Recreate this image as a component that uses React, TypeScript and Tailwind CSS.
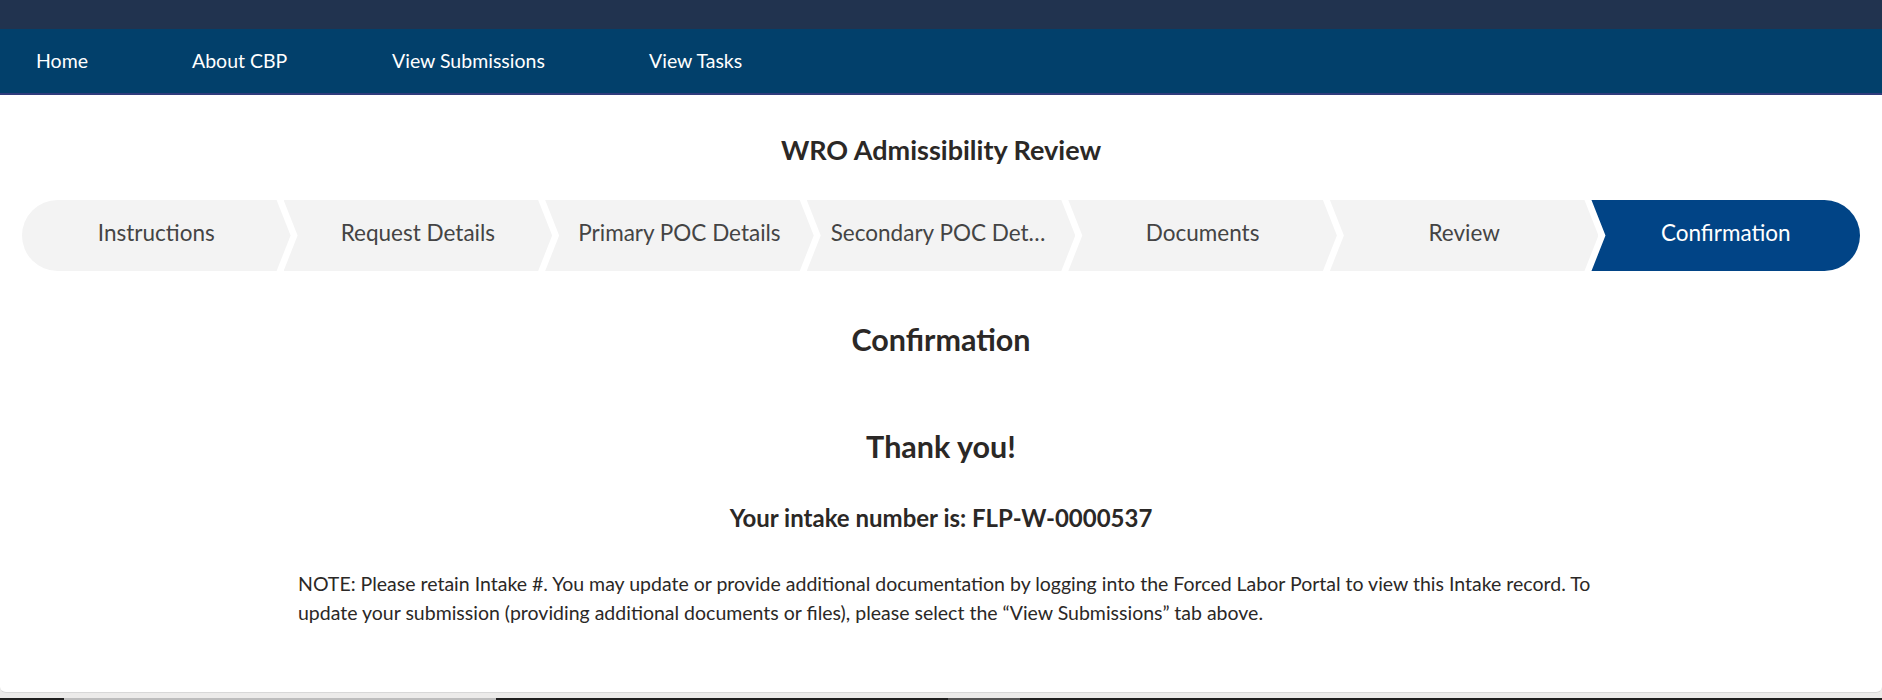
import React from 'react';

const navLinks = [
  { label: 'Home', className: 'w-[156px]' },
  { label: 'About CBP', className: 'w-[200px]' },
  { label: 'View Submissions', className: 'w-[257px]' },
  { label: 'View Tasks', className: 'w-[120px]' }
];

const steps = ['Instructions', 'Request Details', 'Primary POC Details', 'Secondary POC Details', 'Documents', 'Review', 'Confirmation'];

function stepShape(index: number) {
  if (index === 0) return 'rounded-l-full [clip-path:polygon(0_0,calc(100%_-_14px)_0,100%_50%,calc(100%_-_14px)_100%,0_100%)]';
  if (index === steps.length - 1) return '-ml-[7px] rounded-r-full [clip-path:polygon(0_0,100%_0,100%_100%,0_100%,14px_50%)]';
  return '-ml-[7px] [clip-path:polygon(0_0,calc(100%_-_14px)_0,100%_50%,calc(100%_-_14px)_100%,0_100%,14px_50%)]';
}

export default function App() {
  const current = steps.length - 1;

  return (
    <div className="flex h-[700px] flex-col overflow-hidden bg-[#ecebea] font-['Lato','Noto_Sans',sans-serif] text-[#2b2826]">
      <div className="h-[29px] shrink-0 bg-[#21334f]" />
      <nav className="flex h-[64px] shrink-0 items-center bg-[#02406b] pl-[36px] text-[19.5px] text-white">
        {navLinks.map((link) => (
          <a key={link.label} className={link.className}>{link.label}</a>
        ))}
      </nav>
      <div className="h-[2px] shrink-0 bg-[#2f3c7c]" />

      <main className="flex h-[598px] shrink-0 flex-col items-center rounded-b-md border-b border-[#d8d8d8] bg-white">
        <h1 className="mt-[39px] text-[27px] font-bold leading-[32px]">WRO Admissibility Review</h1>

        <div className="mt-[34px] flex h-[71px] w-full px-[22px]">
          {steps.map((step, index) => (
            <div
              key={step}
              className={`flex min-w-0 flex-1 items-center justify-center px-[24px] pb-[5px] text-[22.5px] ${stepShape(index)} ${index === current ? 'bg-[#014486] text-white' : 'bg-[#f3f3f3] text-[#444444]'}`}
            >
              <span className="truncate">{step}</span>
            </div>
          ))}
        </div>

        <h2 className="mt-[50px] text-[30.5px] font-bold leading-[37px]">Confirmation</h2>
        <h3 className="mt-[70px] text-[30.5px] font-bold leading-[37px]">Thank you!</h3>
        <p className="mt-[38px] text-[24px] font-bold leading-[30px]">Your intake number is: FLP-W-0000537</p>
        <p className="mt-[36px] ml-[298px] w-[1300px] self-start text-[19.5px] leading-[29px] text-[#2b2826]">
          NOTE: Please retain Intake #. You may update or provide additional documentation by logging into the Forced Labor Portal to view this Intake record. To update your submission (providing additional documents or files), please select the “View Submissions” tab above.
        </p>
      </main>

      <div className="mt-auto flex h-[2px] shrink-0">
        <div className="w-[64px] bg-[#1f1f1f]" />
        <div className="w-[432px] bg-[#bdbdbd]" />
        <div className="w-[452px] bg-[#1f1f1f]" />
        <div className="w-[72px] bg-[#555555]" />
        <div className="flex-1 bg-[#1f1f1f]" />
      </div>
    </div>
  );
}
